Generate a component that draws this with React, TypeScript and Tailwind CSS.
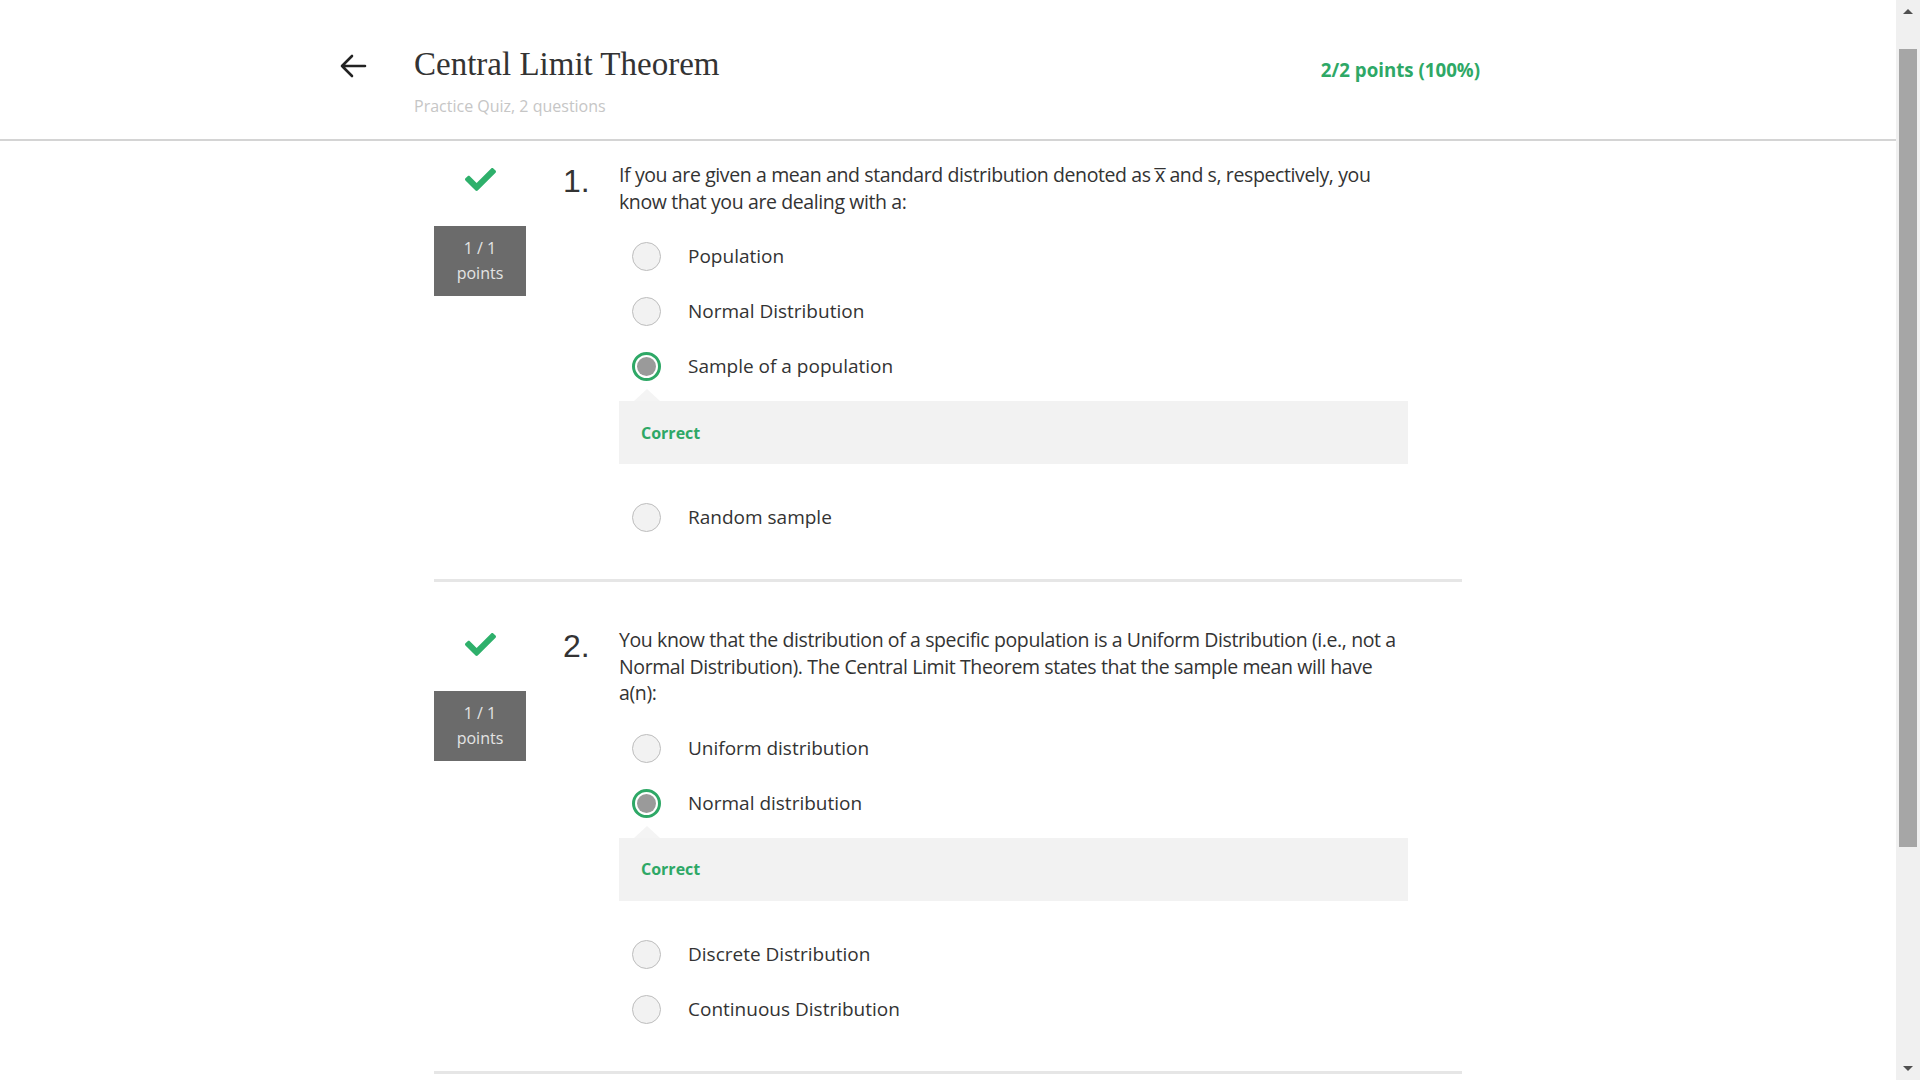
import { FaCheck } from "react-icons/fa";

const GREEN = "text-[#2ea866]";

type Option = { label: string, selected?: boolean };

const questions: { num: number, text: React.ReactNode, options: Option[], pt: string }[] = [
  {
    num: 1,
    pt: "pt-[21px]",
    text: <>If you are given a mean and standard distribution denoted as x&#773; and s, respectively, you know that you are dealing with a:</>,
    options: [
      { label: "Population" },
      { label: "Normal Distribution" },
      { label: "Sample of a population", selected: true },
      { label: "Random sample" },
    ],
  },
  {
    num: 2,
    pt: "pt-[45px]",
    text: <>You know that the distribution of a specific population is a Uniform Distribution (i.e., not a Normal Distribution). The Central Limit Theorem states that the sample mean will have a(n):</>,
    options: [
      { label: "Uniform distribution" },
      { label: "Normal distribution", selected: true },
      { label: "Discrete Distribution" },
      { label: "Continuous Distribution" },
    ],
  },
];

const Radio = ({ selected }: { selected?: boolean }) => (
  selected ? (
    <span className="w-[29px] h-[29px] rounded-full border-[3px] border-[#2ea866] bg-white p-[2px] flex">
      <span className="flex-1 rounded-full bg-[#9a9a9a]" />
    </span>
  ) : (
    <span className="w-[29px] h-[29px] rounded-full border border-[#bdbdbd] bg-[#f2f2f2]" />
  )
);

const Feedback = () => (
  <div className="flex flex-col mt-[-5px] mb-[26px]">
    <div className="ml-[15px] w-0 h-0 border-l-[13px] border-r-[13px] border-b-[12px] border-l-transparent border-r-transparent border-b-[#f4f4f4]" />
    <div className="h-[63px] bg-[#f2f2f2] flex items-center px-[22px]">
      <span className={`font-bold text-[16px] ${GREEN}`}>Correct</span>
    </div>
  </div>
);

const Question = ({ q }: { q: typeof questions[number] }) => (
  <div className={`${q.pt} pb-[34px] border-b-[3px] border-[#e6e6e6] flex`}>
    <div className="w-[92px] flex flex-col items-center">
      <FaCheck className="mt-[2px] text-[#2eb06b]" size={31} />
      <div className="mt-[31px] w-[92px] h-[70px] bg-[#6b6b6b] text-[#e4e4e4] text-[16px] leading-[25px] flex flex-col items-center justify-center">
        <span>1 / 1</span>
        <span>points</span>
      </div>
    </div>
    <div className="ml-[37px] w-[56px] text-[32px] leading-none text-[#333] pt-[3px]" style={{ fontFamily: '"Liberation Sans", Arial, sans-serif' }}>
      {q.num}.
    </div>
    <div className="w-[789px] flex flex-col">
      <p className="text-[19.5px] leading-[26.5px] text-[#333] tracking-[-0.02em]">{q.text}</p>
      <div className="mt-[14px] flex flex-col">
        {q.options.map(o => (
          <div key={o.label}>
            <div className="h-[55px] flex items-center pl-[13px]">
              <Radio selected={o.selected} />
              <span className="ml-[27px] text-[19px] text-[#333]">{o.label}</span>
            </div>
            {o.selected && <Feedback />}
          </div>))}
      </div>
    </div>
  </div>
);

export default function App() {
  return (
    <div className="h-screen w-full flex overflow-hidden bg-white" style={{ fontFamily: '"Open Sans", "Liberation Sans", sans-serif' }}>
      <div className="flex-1 flex flex-col">
        <header className="h-[141px] shrink-0 border-b-2 border-[#d4d4d4]">
          <div className="ml-[339px] w-[1141px] flex items-start">
            <svg className="mt-[53px]" width="28" height="26" viewBox="0 0 28 26" fill="none" stroke="#222" strokeWidth="2.6" strokeLinecap="round" strokeLinejoin="round">
              <path d="M26 13H3M13 3L3 13l10 10" />
            </svg>
            <div className="ml-[47px] flex flex-col">
              <h1 className="mt-[44px] text-[33px] leading-[40px] text-[#333]" style={{ fontFamily: '"Liberation Serif", "Times New Roman", serif' }}>Central Limit Theorem</h1>
              <span className="mt-[10px] text-[16px] text-[#c6c6c6]">Practice Quiz, 2 questions</span>
            </div>
            <span className={`ml-auto mt-[56px] text-[18.7px] font-bold ${GREEN}`}>2/2 points (100%)</span>
          </div>
        </header>
        <main className="w-[1028px] mx-auto">
          {questions.map(q => <Question key={q.num} q={q} />)}
        </main>
      </div>
      <div className="w-[24px] shrink-0 bg-[#f0f0f0] flex flex-col items-center">
        <div className="mt-[9px] w-0 h-0 border-l-[5px] border-r-[5px] border-b-[5px] border-l-transparent border-r-transparent border-b-[#505050]" />
        <div className="mt-[35px] w-[18px] h-[798px] bg-[#a6a6a6]" />
        <div className="mt-auto mb-[9px] w-0 h-0 border-l-[5px] border-r-[5px] border-t-[5px] border-l-transparent border-r-transparent border-t-[#505050]" />
      </div>
    </div>
  );
}
